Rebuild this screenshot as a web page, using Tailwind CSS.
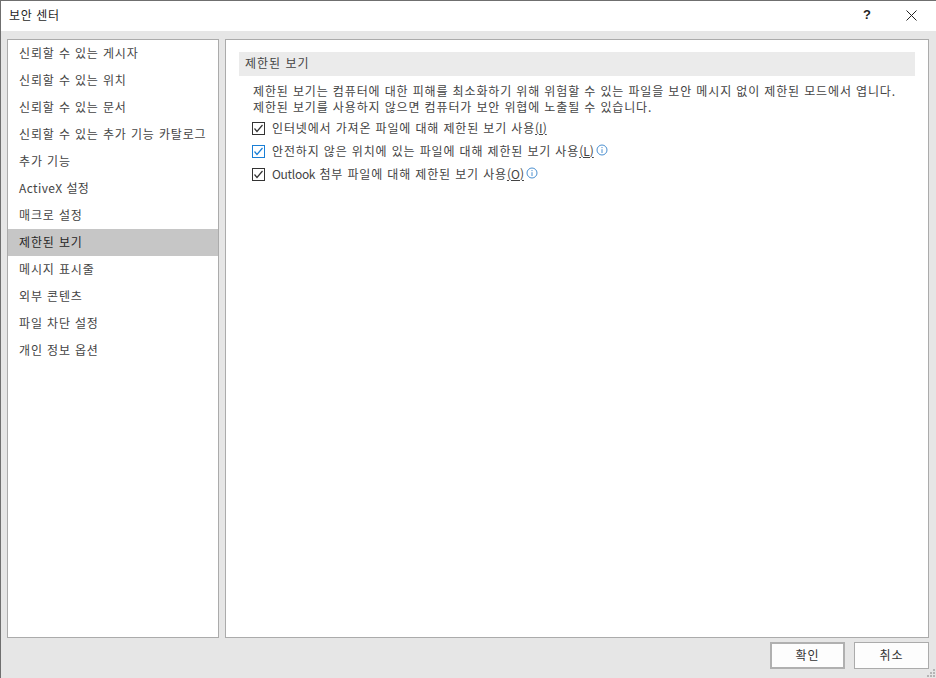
<!DOCTYPE html>
<html lang="ko"><head><meta charset="utf-8"><script src="https://cdn.jsdelivr.net/npm/@tailwindcss/browser@4"></script></head>
<body class="m-0 overflow-hidden">
<div class="relative w-[936px] h-[678px] flex flex-col bg-[#e6e6e6] border border-[#6f6f6f] border-b-0 border-r-0 text-[12px] text-[#444] [font-family:'Noto_Sans_CJK_KR','Noto_Sans',sans-serif]">
  <div class="h-[30px] shrink-0 bg-white flex items-center pl-[8px] pb-[2px] text-[#1f1f1f] text-[12px]">
    <span class="flex-1 tracking-[0.6px]">보안 센터</span>
    <span class="w-[14px] text-center text-[13px] font-bold [font-family:'Liberation_Sans',sans-serif] mr-[32px]">?</span>
    <svg class="mr-[19px]" width="11" height="11" viewBox="0 0 11 11" fill="none" stroke="#222" stroke-width="1"><path d="M0.5 0.5L10.5 10.5M10.5 0.5L0.5 10.5"/></svg>
  </div>
  <div class="flex-1 flex gap-[6px] pl-[6px] pr-[7px] pt-[8px] min-h-0">
    <ul class="w-[212px] h-[599px] bg-white border border-[#ababab] tracking-[0.85px]">
      <li class="h-[27px] pl-[11px] pb-[2px] flex items-center">신뢰할 수 있는 게시자</li>
      <li class="h-[27px] pl-[11px] pb-[2px] flex items-center">신뢰할 수 있는 위치</li>
      <li class="h-[27px] pl-[11px] pb-[2px] flex items-center">신뢰할 수 있는 문서</li>
      <li class="h-[27px] pl-[11px] pb-[2px] flex items-center">신뢰할 수 있는 추가 기능 카탈로그</li>
      <li class="h-[27px] pl-[11px] pb-[2px] flex items-center">추가 기능</li>
      <li class="h-[27px] pl-[11px] pb-[2px] flex items-center tracking-[0.4px]">ActiveX 설정</li>
      <li class="h-[27px] pl-[11px] pb-[2px] flex items-center">매크로 설정</li>
      <li class="h-[27px] pl-[11px] pb-[2px] flex items-center bg-[#c6c6c6] text-[#262626]">제한된 보기</li>
      <li class="h-[27px] pl-[11px] pb-[2px] flex items-center">메시지 표시줄</li>
      <li class="h-[27px] pl-[11px] pb-[2px] flex items-center">외부 콘텐츠</li>
      <li class="h-[27px] pl-[11px] pb-[2px] flex items-center">파일 차단 설정</li>
      <li class="h-[27px] pl-[11px] pb-[2px] flex items-center">개인 정보 옵션</li>
    </ul>
    <div class="w-[704px] h-[599px] bg-white border border-[#ababab] pt-[12px] pl-[13px] pr-[13px]">
      <div class="h-[24px] w-[676px] bg-[#ebebeb] flex items-center pl-[6px] pb-[2px] tracking-[1px]">제한된 보기</div>
      <p class="mt-[7px] ml-[14px] leading-[16px] tracking-[0.86px] whitespace-nowrap">제한된 보기는 컴퓨터에 대한 피해를 최소화하기 위해 위험할 수 있는 파일을 보안 메시지 없이 제한된 모드에서 엽니다.<br>제한된 보기를 사용하지 않으면 컴퓨터가 보안 위협에 노출될 수 있습니다.</p>
      <div class="mt-[2px] ml-[13px] tracking-[0.85px]">
        <label class="h-[23px] flex items-center gap-[7px]">
          <svg width="13" height="13" viewBox="0 0 13 13" fill="none"><rect x="0.5" y="0.5" width="12" height="12" stroke="#333"/><path d="M2.5 6.5L5 9.5L10.5 3" stroke="#333" stroke-width="1.2"/></svg>
          <span class="-mt-[1px]">인터넷에서 가져온 파일에 대해 제한된 보기 사용<span class="underline tracking-normal">(I)</span></span>
        </label>
        <label class="h-[23px] flex items-center gap-[7px]">
          <svg width="13" height="13" viewBox="0 0 13 13" fill="none"><rect x="0.5" y="0.5" width="12" height="12" stroke="#1a7fd6"/><path d="M2.5 6.5L5 9.5L10.5 3" stroke="#1a7fd6" stroke-width="1.2"/></svg>
          <span class="-mt-[1px]">안전하지 않은 위치에 있는 파일에 대해 제한된 보기 사용<span class="underline tracking-normal">(L)</span></span>
          <svg class="-ml-[5px] -mt-[3px]" width="12" height="12" viewBox="0 0 12 12" fill="none"><circle cx="6" cy="6" r="5" stroke="#4a8fd0"/><path d="M6 5.2V9M6 3V4.1" stroke="#4a8fd0"/></svg>
        </label>
        <label class="h-[23px] flex items-center gap-[7px]">
          <svg width="13" height="13" viewBox="0 0 13 13" fill="none"><rect x="0.5" y="0.5" width="12" height="12" stroke="#333"/><path d="M2.5 6.5L5 9.5L10.5 3" stroke="#333" stroke-width="1.2"/></svg>
          <span class="-mt-[1px]"><span class="tracking-[-0.3px]">Outlook</span> 첨부 파일에 대해 제한된 보기 사용<span class="underline tracking-normal">(O)</span></span>
          <svg class="-ml-[5px] -mt-[3px]" width="12" height="12" viewBox="0 0 12 12" fill="none"><circle cx="6" cy="6" r="5" stroke="#4a8fd0"/><path d="M6 5.2V9M6 3V4.1" stroke="#4a8fd0"/></svg>
        </label>
      </div>
    </div>
  </div>
  <div class="h-[39px] shrink-0 flex items-start justify-end gap-[9px] pt-[3px] pr-[7px]">
    <button class="w-[75px] h-[27px] pb-[2px] bg-[#fdfdfd] border-2 border-[#b0b0b0] text-[#333] tracking-[1px]">확인</button>
    <button class="w-[75px] h-[27px] pb-[2px] bg-[#fdfdfd] border border-[#ababab] text-[#333] tracking-[1px]">취소</button>
  </div>
  <svg class="absolute right-[0px] bottom-[0px]" width="9" height="9" viewBox="0 0 9 9" fill="#b5b5b5"><rect x="6" y="0" width="2" height="2"/><rect x="3" y="3" width="2" height="2"/><rect x="6" y="3" width="2" height="2"/><rect x="0" y="6" width="2" height="2"/><rect x="3" y="6" width="2" height="2"/><rect x="6" y="6" width="2" height="2"/></svg>
</div>
</body></html>
